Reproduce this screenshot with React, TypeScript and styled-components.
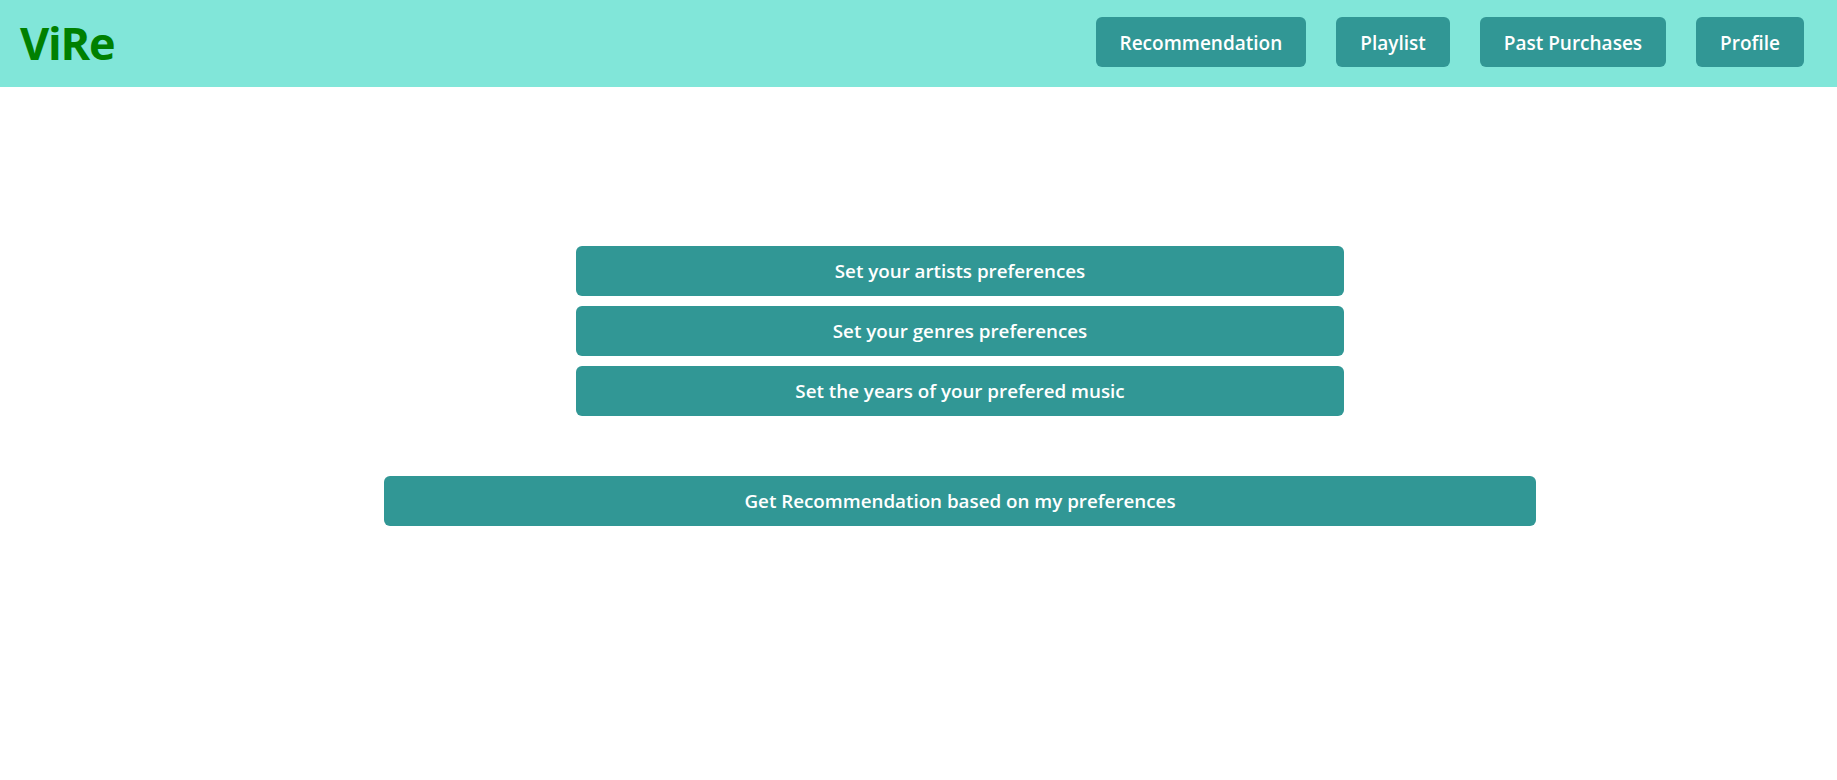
import { FC } from 'react';
import styled, { createGlobalStyle } from 'styled-components';

const GlobalStyle = createGlobalStyle`
  body {
    margin: 0;
    background: #ffffff;
    font-family: 'Open Sans', 'Noto Sans', sans-serif;
  }
`;

const Header = styled.header`
  box-sizing: border-box;
  height: 87px;
  display: flex;
  align-items: center;
  justify-content: space-between;
  padding: 0 33px 3px 20px;
  background-color: #81e6d9;
`;

const Logo = styled.h1`
  margin: 0;
  font-size: 45px;
  font-weight: 700;
  color: #008000;
  letter-spacing: -1.2px;
`;

const Nav = styled.nav`
  display: flex;
  align-items: center;
  gap: 30px;
`;

const TealButton = styled.button<{ $width?: number }>`
  height: 50px;
  width: ${({ $width }) => ($width ? `${$width}px` : 'auto')};
  padding: 0 24px;
  border: none;
  border-radius: 6px;
  background-color: #319795;
  color: #ffffff;
  font-family: 'Open Sans', 'Noto Sans', sans-serif;
  font-size: 18.8px;
  font-weight: 600;
  cursor: pointer;
`;

const NavButton = styled(TealButton)`
  padding: 2px 24px 0;
  font-size: 19px;
`;

const Main = styled.main`
  display: flex;
  flex-direction: column;
  align-items: flex-start;
  padding: 159px 0 0 384px;
  gap: 60px;
`;

const PreferenceList = styled.div`
  display: flex;
  flex-direction: column;
  gap: 10px;
  margin-left: 192px;
`;

const NAV_ITEMS = ['Recommendation', 'Playlist', 'Past Purchases', 'Profile'];

const PREFERENCES = [
  'Set your artists preferences',
  'Set your genres preferences',
  'Set the years of your prefered music',
];

const App: FC = () => (
  <>
    <GlobalStyle />
    <Header>
      <Logo>ViRe</Logo>
      <Nav>
        {NAV_ITEMS.map((item) => (
          <NavButton key={item} type="button">
            {item}
          </NavButton>
        ))}
      </Nav>
    </Header>
    <Main>
      <PreferenceList>
        {PREFERENCES.map((label) => (
          <TealButton key={label} type="button" $width={768}>
            {label}
          </TealButton>
        ))}
      </PreferenceList>
      <TealButton type="button" $width={1152}>
        Get Recommendation based on my preferences
      </TealButton>
    </Main>
  </>
);

export default App;
